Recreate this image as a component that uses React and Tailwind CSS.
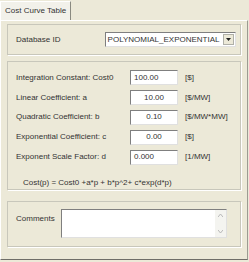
import React from "react";

const font = { fontFamily: '"Liberation Sans", Arial, sans-serif' };

function Row({ label, value, unit, align }) {
  return (
    <div className="flex items-center h-[20px]">
      <div className="w-[114px] shrink-0">{label}</div>
      <div
        className={`w-[48px] h-[15px] bg-white border border-t-[#7f7f7f] border-l-[#7f7f7f] border-r-[#e0e0e0] border-b-[#e0e0e0] flex items-center ${align === "center" ? "justify-center" : "pl-[3px]"}`}
      >
        {value}
      </div>
      <div className="ml-[7px]">{unit}</div>
    </div>
  );
}

export default function App() {
  return (
    <div
      className="w-[249px] h-[262px] bg-[#ECE9D8] text-[8px] text-[#333] flex flex-col overflow-hidden"
      style={font}
    >
      <div className="h-[20px] flex items-end shrink-0">
        <div className="h-[19px] px-[4px] flex items-center bg-[#F2F1EA] border-l border-t border-white border-r border-r-[#8a8a80] text-[8px]">
          Cost Curve Table
        </div>
      </div>
      <div className="flex-1 border border-t-white border-l-white border-r-[#9c9b92] border-b-[#6f6e68] flex flex-col px-[6px] pt-[3px] pb-[10px] mb-[2px] mr-[1px]">
        <div className="h-[31px] border border-[#c8c7bb] shadow-[1px_1px_0_#fff] flex items-center pl-[8px] pr-[4px]">
          <div className="w-[89px]">Database ID</div>
          <div className="w-[132px] h-[15px] bg-white border border-t-[#7f7f7f] border-l-[#7f7f7f] border-r-[#e0e0e0] border-b-[#e0e0e0] flex items-center pl-[2px] justify-between">
            <span>POLYNOMIAL_EXPONENTIAL</span>
            <span className="w-[11px] h-[11px] mr-[1px] bg-[#ECE9D8] border border-[#b0b0a8] flex items-center justify-center">
              <svg width="5" height="3" viewBox="0 0 5 3"><path d="M0 0h5L2.5 3z" fill="#222" /></svg>
            </span>
          </div>
        </div>
        <div className="mt-[6px] h-[129px] border border-[#c8c7bb] shadow-[1px_1px_0_#fff] flex flex-col pl-[8px] pt-[6px]">
          <Row label="Integration Constant:  Cost0" value="100.00" unit="[$]" />
          <Row label="Linear Coefficient: a" value="10.00" unit="[$/MW]" align="center" />
          <Row label="Quadratic Coefficient: b" value="0.10" unit="[$/MW*MW]" align="center" />
          <Row label="Exponential Coefficient: c" value="0.00" unit="[$]" align="center" />
          <Row label="Exponent Scale Factor: d" value="0.000" unit="[1/MW]" />
          <div className="mt-[10px] pl-[7px]">Cost(p) = Cost0 +a*p + b*p^2+ c*exp(d*p)</div>
        </div>
        <div className="mt-[11px] h-[46px] border border-[#c8c7bb] shadow-[1px_1px_0_#fff] flex items-start pl-[8px] pt-[7px]">
          <div className="w-[45px] pt-[4px]">Comments</div>
          <div className="w-[166px] h-[29px] bg-white border border-t-[#7f7f7f] border-l-[#7f7f7f] border-r-[#e0e0e0] border-b-[#e0e0e0] flex justify-end">
            <div className="w-[11px] flex flex-col justify-between bg-[#f4f4f0]">
              <div className="h-[11px] flex items-center justify-center">
                <svg width="5" height="3" viewBox="0 0 5 3"><path d="M0 3L2.5 0L5 3" fill="none" stroke="#b8b8b8" /></svg>
              </div>
              <div className="h-[11px] flex items-center justify-center">
                <svg width="5" height="3" viewBox="0 0 5 3"><path d="M0 0L2.5 3L5 0" fill="none" stroke="#b8b8b8" /></svg>
              </div>
            </div>
          </div>
        </div>
      </div>
    </div>
  );
}
